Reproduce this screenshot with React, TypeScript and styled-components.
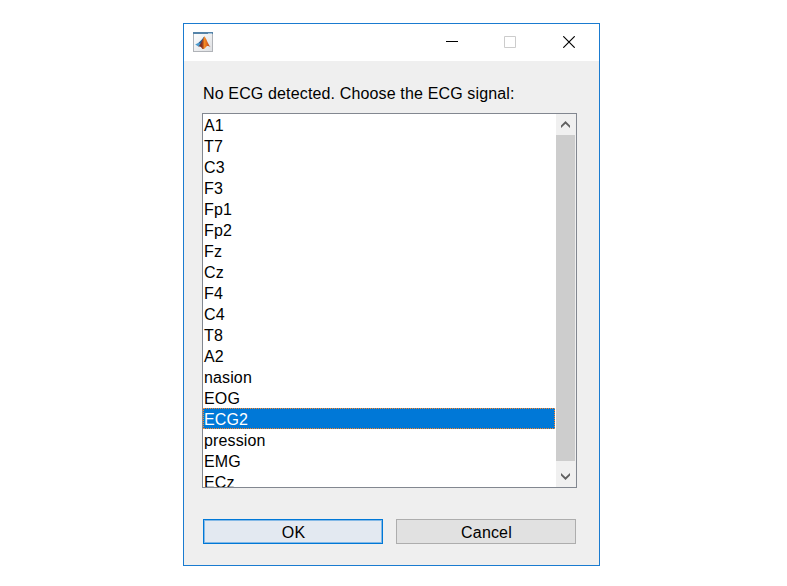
import React, { useState } from "react";
import styled, { createGlobalStyle, css } from "styled-components";

const GlobalStyle = createGlobalStyle`
  * { box-sizing: border-box; }
  body {
    margin: 0;
    background: #ffffff;
    overflow: hidden;
    font-family: "Liberation Sans", Arial, sans-serif;
    font-size: 16px;
    color: #000000;
  }
`;

const Desktop = styled.main`
  width: 787px;
  height: 586px;
  padding: 23px 0 0 183px;
`;

const Dialog = styled.section`
  display: flex;
  flex-direction: column;
  width: 417px;
  height: 543px;
  border: 1px solid #1a7bd0;
  background: #efefef;
`;

const TitleBar = styled.header`
  display: flex;
  align-items: flex-start;
  justify-content: space-between;
  height: 37px;
  padding: 8px 0 0 9px;
  background: #ffffff;
`;

const WindowControls = styled.div`
  display: flex;
  gap: 47px;
  padding: 4px 24px 0 0;
  svg { display: block; }
`;

const CaptionButton = styled.button`
  width: 12px;
  height: 12px;
  padding: 0;
  border: 0;
  background: none;
`;

const MinimizeButton = styled(CaptionButton)`
  margin-right: -1px;
`;

const Content = styled.div`
  display: flex;
  flex-direction: column;
  padding: 24px 22px 0 18px;
`;

const Prompt = styled.label`
  height: 28px;
  padding-left: 1px;
  line-height: 18px;
  letter-spacing: 0.145px;
  white-space: nowrap;
`;

const ListBox = styled.div`
  display: flex;
  width: 375px;
  height: 375px;
  border: 1px solid #828790;
  background: #ffffff;
  overflow: hidden;
`;

const Options = styled.ul`
  flex: none;
  width: 352px;
  height: 373px;
  margin: 0 1px 0 0;
  padding: 0;
  list-style: none;
  overflow: hidden;
`;

const Option = styled.li<{ $selected: boolean }>`
  height: 21px;
  padding: 1px 0 0 1px;
  line-height: 21px;
  letter-spacing: 0.13px;
  cursor: default;
  ${({ $selected }) =>
    $selected &&
    css`
      padding: 0;
      border: 1px dotted #ff8728;
      background: #0078d7;
      color: #ffffff;
    `}
`;

const ScrollBar = styled.div`
  display: flex;
  flex-direction: column;
  width: 20px;
  background: #f0f0f0;
`;

const ScrollArrow = styled.div<{ $height: number; $top: number }>`
  flex: none;
  height: ${({ $height }) => $height}px;
  padding: ${({ $top }) => $top}px 0 0 5px;
  svg { display: block; }
`;

const Thumb = styled.div`
  flex: 1;
  width: 19px;
  background: #cdcdcd;
`;

const ButtonRow = styled.footer`
  display: flex;
  gap: 13px;
  margin: 31px 0 0 1px;
`;

const DialogButton = styled.button<{ $primary?: boolean }>`
  width: 180px;
  height: 25px;
  padding: 2px 0 0 1px;
  border: 1px solid ${({ $primary }) => ($primary ? "#0078d7" : "#adadad")};
  background: ${({ $primary }) => ($primary ? "#e3e9f1" : "#e1e1e1")};
  box-shadow: ${({ $primary }) => ($primary ? "inset 0 0 0 1px #84b9e6" : "none")};
  color: #000000;
  font: 16px/21px "Liberation Sans", Arial, sans-serif;
  letter-spacing: 0.16px;
`;

const AppIcon = () => (
  <svg width="20" height="20" viewBox="0 0 20 20">
    <defs>
      <linearGradient id="panel" x1="0" y1="0" x2="1" y2="1">
        <stop offset="0" stopColor="#ffffff" />
        <stop offset="1" stopColor="#dddfe2" />
      </linearGradient>
      <linearGradient id="peak" x1="0" y1="0" x2="1" y2="0">
        <stop offset="0" stopColor="#70251c" />
        <stop offset=".3" stopColor="#8a3020" />
        <stop offset=".5" stopColor="#f58a24" />
        <stop offset=".68" stopColor="#e06a20" />
        <stop offset="1" stopColor="#a83a1c" />
      </linearGradient>
    </defs>
    <rect x=".5" y=".5" width="19" height="19" fill="url(#panel)" stroke="#b0b3b8" />
    <path d="M0 0h20v2H0z" fill="#5583a8" />
    <path d="M15 1h4v1h-4z" fill="#a4c4dc" />
    <path d="M2.2 12.4 6 10.4 9 7.6 11.2 4.4 9.5 12 5.8 14.8z" fill="#4d9bcd" />
    <path d="M5.6 10.8 9 7.6 11.2 4.4 9 12.4z" fill="#315d91" />
    <path d="M5.4 14.2c2-.8 4.1-6.2 6-9.9 2 2 3.6 8 6.2 11-2.4-1.8-3.9-1.5-5.4.6-1 1-1.7 1.3-2.8 1.2-.7-1.7-2-2.9-4-2.9z" fill="url(#peak)" />
  </svg>
);

const channels = [
  "A1", "T7", "C3", "F3", "Fp1", "Fp2", "Fz", "Cz", "F4",
  "C4", "T8", "A2", "nasion", "EOG", "ECG2", "pression", "EMG", "ECz",
];

export default function App() {
  const [selected, setSelected] = useState("ECG2");
  return (
    <Desktop>
      <GlobalStyle />
      <Dialog role="dialog">
        <TitleBar>
          <AppIcon />
          <WindowControls>
            <MinimizeButton aria-label="Minimize">
              <svg width="12" height="12"><path d="M0 5h12v1H0z" fill="#000" /></svg>
            </MinimizeButton>
            <CaptionButton aria-label="Maximize" disabled>
              <svg width="12" height="12"><path d="M.5.5h11v11H.5z" fill="none" stroke="#ccc" /></svg>
            </CaptionButton>
            <CaptionButton aria-label="Close">
              <svg width="12" height="12"><path d="m.3.3 11.4 11.4m0-11.4L.3 11.7" stroke="#000" strokeWidth="1.15" /></svg>
            </CaptionButton>
          </WindowControls>
        </TitleBar>
        <Content>
          <Prompt>No ECG detected. Choose the ECG signal:</Prompt>
          <ListBox>
            <Options role="listbox">
              {channels.map((name) => (
                <Option
                  key={name}
                  role="option"
                  aria-selected={name === selected}
                  $selected={name === selected}
                  onClick={() => setSelected(name)}
                >
                  {name}
                </Option>
              ))}
            </Options>
            <ScrollBar>
              <ScrollArrow $height={21} $top={7}>
                <svg width="9" height="7"><path d="M0 4.5 4.5 0 9 4.5V7L4.5 2.7 0 7z" fill="#606060" /></svg>
              </ScrollArrow>
              <Thumb />
              <ScrollArrow $height={26} $top={12}>
                <svg width="9" height="7"><path d="M0 2.5 4.5 7 9 2.5V0L4.5 4.3 0 0z" fill="#606060" /></svg>
              </ScrollArrow>
            </ScrollBar>
          </ListBox>
          <ButtonRow>
            <DialogButton $primary>OK</DialogButton>
            <DialogButton>Cancel</DialogButton>
          </ButtonRow>
        </Content>
      </Dialog>
    </Desktop>
  );
}
